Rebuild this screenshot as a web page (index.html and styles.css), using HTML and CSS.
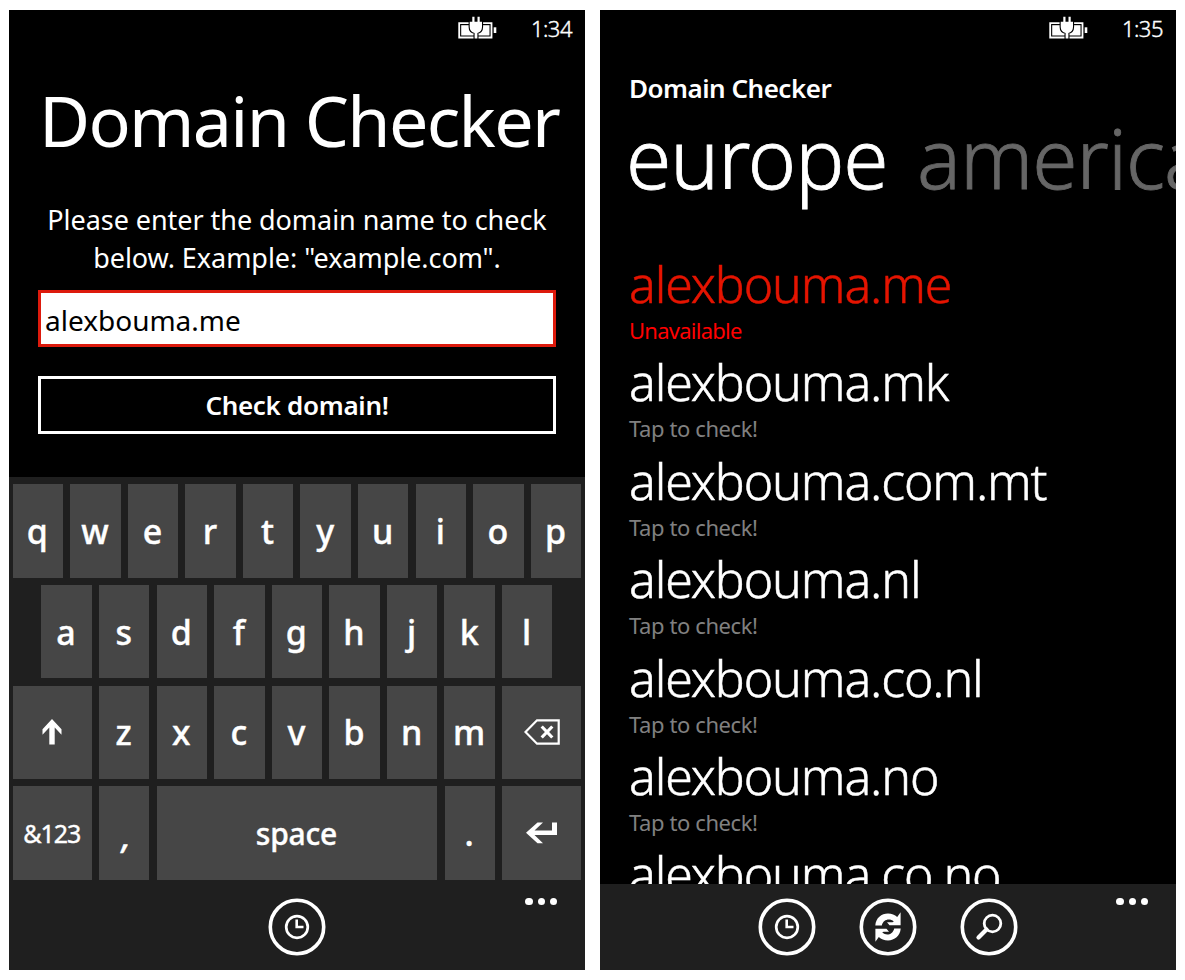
FILE: index.html
```html
<!DOCTYPE html>
<html lang="en">
<head>
<meta charset="utf-8">
<title>Domain Checker</title>
<link rel="stylesheet" href="styles.css">
</head>
<body>
<svg class="defs" width="0" height="0">
  <symbol id="battery" viewBox="0 0 40 24">
    <path d="M1.200 7.200H33.500V21.500H1.200Z" fill="none" stroke="#fff" stroke-width="1.800"/>
    <path d="M3.200 9.200H31.500V19.500H3.200Z" fill="#fff"/>
    <path d="M35.700 11.300h2.600v5.700h-2.600Z" fill="#fff"/>
    <path d="M14.300.8h2.200V5.800h3V.8h2.200V5.800H24v5.200c0 3.300-2 5.300-4.600 6V22.500h-2.800v-5.500C13.700 16.300 11.700 14.300 11.700 11V5.800h2.600Z" fill="#fff" stroke="#000" stroke-width="2.200" paint-order="stroke"/>
  </symbol>
  <symbol id="clock" viewBox="0 0 58 58">
    <g fill="none" stroke="#fff"><circle cx="29" cy="29" r="26.700" stroke-width="3.600"/><circle cx="29" cy="29" r="10.800" stroke-width="2.700"/><path d="M28.700 21.500V29H35.500" stroke-width="2.600"/></g>
  </symbol>
  <symbol id="refresh" viewBox="0 0 58 58">
    <circle cx="29" cy="29" r="26.700" fill="none" stroke="#fff" stroke-width="3.600"/>
    <path id="swoosh" fill="#fff" d="M16.300 27.500C16.800 20 22.500 15.600 29 15.600C32.800 15.600 35.800 16.800 38.200 19L41.600 14.300V27.300H30.500L28 24.300H33.500L34.800 23.400C30.500 19.800 24.200 21.300 22.800 27.500Z"/>
    <use href="#swoosh" transform="rotate(180 29 29)"/>
  </symbol>
  <symbol id="search" viewBox="0 0 58 58">
    <g fill="none" stroke="#fff"><circle cx="29" cy="29" r="26.700" stroke-width="3.600"/><circle cx="32.500" cy="25.500" r="8.300" stroke-width="2.800"/><path d="M26.500 31.500L18.500 39.500" stroke-width="4.200" stroke-linecap="round"/></g>
  </symbol>
</svg>
<main class="stage">
  <section class="phone phone-entry">
    <header class="status"><svg class="battery"><use href="#battery"/></svg><span class="time">1:34</span></header>
    <h1 class="title">Domain Checker</h1>
    <p class="hint">Please enter the domain name to check<br>below. Example: "example.com".</p>
    <div class="field">alexbouma.me</div>
    <div class="button">Check domain!</div>
    <div class="keyboard">
      <div class="row"><b>q</b><b>w</b><b>e</b><b>r</b><b>t</b><b>y</b><b>u</b><b>i</b><b>o</b><b>p</b></div>
      <div class="row row-home"><b>a</b><b>s</b><b>d</b><b>f</b><b>g</b><b>h</b><b>j</b><b>k</b><b>l</b></div>
      <div class="row">
        <b class="wide"><svg width="20" height="26" viewBox="0 0 20 26"><path d="M10 0L19.500 10.200V15.800L12.700 8.500V25.500H7.300V8.500L.5 15.800V10.200Z" fill="#fff"/></svg></b>
        <b>z</b><b>x</b><b>c</b><b>v</b><b>b</b><b>n</b><b>m</b>
        <b class="wide"><svg width="36" height="26" viewBox="0 0 36 26"><path d="M1.500 13L13 1.300H34.700V24.700H13Z" fill="none" stroke="#fff" stroke-width="2.200"/><path d="M17.700 7.500L28.300 18.500M28.300 7.500L17.700 18.500" stroke="#fff" stroke-width="3.200"/></svg></b>
      </div>
      <div class="row">
        <b class="wide sym">&amp;123</b><b class="comma">,</b><b class="space">space</b><b>.</b>
        <b class="wide"><svg width="31" height="22" viewBox="0 0 31 22"><path d="M0 10.800L11.500 .5H17L8.500 8.600H26V.5H31V13H8.500L17 21.200H11.500Z" fill="#fff"/></svg></b>
      </div>
    </div>
    <footer class="appbar">
      <svg class="round"><use href="#clock"/></svg>
      <div class="dots"><i></i><i></i><i></i></div>
    </footer>
  </section>
  <section class="phone phone-results">
    <header class="status"><svg class="battery"><use href="#battery"/></svg><span class="time">1:35</span></header>
    <div class="app-name">Domain Checker</div>
    <nav class="pivot"><span>europe</span><span class="next">america</span></nav>
    <div class="results">
      <div class="item taken"><div class="domain">alexbouma.me</div><div class="state">Unavailable</div></div>
      <div class="item"><div class="domain">alexbouma.mk</div><div class="state">Tap to check!</div></div>
      <div class="item"><div class="domain">alexbouma.com.mt</div><div class="state">Tap to check!</div></div>
      <div class="item"><div class="domain">alexbouma.nl</div><div class="state">Tap to check!</div></div>
      <div class="item"><div class="domain">alexbouma.co.nl</div><div class="state">Tap to check!</div></div>
      <div class="item"><div class="domain">alexbouma.no</div><div class="state">Tap to check!</div></div>
      <div class="item"><div class="domain">alexbouma.co.no</div></div>
    </div>
    <footer class="appbar">
      <svg class="round"><use href="#clock"/></svg>
      <svg class="round"><use href="#refresh"/></svg>
      <svg class="round"><use href="#search"/></svg>
      <div class="dots"><i></i><i></i><i></i></div>
    </footer>
  </section>
</main>
</body>
</html>
```
FILE: styles.css
```css
* { box-sizing: border-box; }
body { margin: 0; background: #fff; color: #fff; font-family: "Noto Sans", "Open Sans", sans-serif; }
.defs { display: block; height: 0; }
.stage { display: flex; gap: 15px; padding: 10px 0 0 9px; width: 1185px; height: 980px; overflow: hidden; }
.phone { position: relative; flex: none; display: flex; flex-direction: column; width: 576px; height: 960px; background: #000; overflow: hidden; white-space: nowrap; }
.status { flex: none; display: flex; justify-content: flex-end; align-items: flex-start; height: 38px; padding: 4px 13px 0 0; }
.battery { width: 40px; height: 24px; margin: 2px 33px 0 0; }
.time { font-size: 22px; line-height: 28px; font-weight: 300; letter-spacing: -.5px; -webkit-text-stroke: .4px currentColor; }
.title { flex: none; margin: 32px 0 0 30px; height: 80px; font-size: 70px; line-height: 80px; font-weight: 400; letter-spacing: -1.700px; }
.hint { flex: none; margin: 41px 0 0; height: 78px; font-size: 27px; line-height: 38.400px; text-align: center; letter-spacing: -.05px; }
.field { flex: none; margin: 11px 29px 0 29px; height: 57px; border: 3px solid #dd1a0c; background: #fff; color: #000; padding-left: 4px; font-size: 28px; line-height: 54px; letter-spacing: 0; }
.button { flex: none; margin: 29px 29px 0; height: 58px; border: 3px solid #fff; font-size: 26px; line-height: 53px; font-weight: 600; text-align: center; letter-spacing: -.3px; }
.keyboard { flex: none; display: flex; flex-direction: column; gap: 7.200px; margin-top: auto; height: 406.800px; padding: 7.200px 3.600px 0; background: #1f1f1f; }
.row { display: flex; gap: 7.200px; height: 93.600px; }
.row-home { padding-left: 28.800px; }
.row b { flex: none; display: flex; align-items: center; justify-content: center; width: 50.400px; height: 93.600px; padding-right: 1px; background: #464646; font-size: 34px; font-weight: 500; -webkit-text-stroke: .4px currentColor; }
.row .wide { width: 79.200px; padding-right: 0; }
.row .space { width: 280.800px; font-size: 30px; letter-spacing: -.2px; }
.row .sym { font-size: 25px; font-weight: 400; letter-spacing: -1.100px; padding-right: 1px; }
.row .comma { font-style: italic; padding: 5px 0 0 4px; }
.appbar { position: relative; z-index: 1; flex: none; display: flex; justify-content: center; gap: 43px; height: 86.400px; padding: 14px 1px 0 0; background: #1f1f1f; }
.round { flex: none; width: 58px; height: 58px; }
.dots { position: absolute; top: 14px; right: 28px; display: flex; gap: 5px; }
.dots i { width: 7.200px; height: 7.200px; border-radius: 50%; background: #fff; }
.app-name { flex: none; margin: 23px 0 0 29px; height: 34px; font-size: 26px; line-height: 34px; font-weight: 600; letter-spacing: -.5px; }
.pivot { flex: none; display: flex; gap: 29.500px; margin: 2px 0 0 26px; height: 100px; font-size: 82px; line-height: 100px; font-weight: 300; letter-spacing: -1px; -webkit-text-stroke: .8px currentColor; }
.next { color: #666; }
.results { flex: 1; min-height: 0; padding: 46px 0 0 29px; overflow: hidden; }
.item { height: 98.400px; }
.domain { height: 62px; font-size: 50px; line-height: 62px; font-weight: 300; letter-spacing: -1.100px; -webkit-text-stroke: .5px currentColor; }
.state { height: 30px; font-size: 22px; line-height: 30px; color: #808080; font-weight: 400; letter-spacing: -.4px; }
.taken .domain { color: #e51400; }
.taken .state { color: #f00; letter-spacing: -.75px; }
```
